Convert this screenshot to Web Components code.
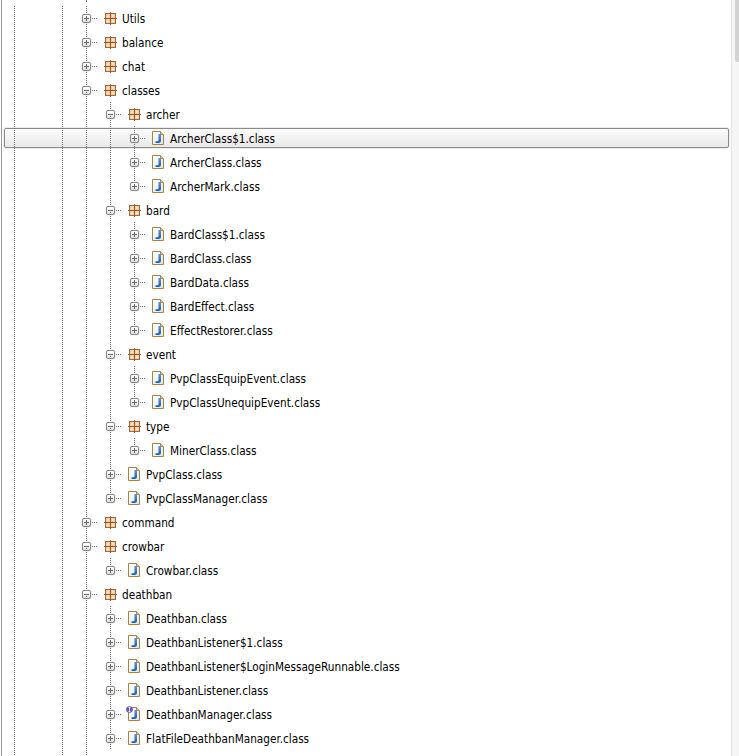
<!DOCTYPE html>
<html>
<head>
<meta charset="utf-8">
<title>Project tree</title>
<style>
  html, body { margin: 0; background: #fff; height: 100%; overflow: hidden; }
</style>
</head>
<body>
<file-tree></file-tree>

<script>
// one row per line of the tree: [depth, name, kind, open, selected]
// kind: p = package, c = class, w = class with the info badge
const ROWS = [
  [3, "Utils", "p"], [3, "balance", "p"], [3, "chat", "p"], [3, "classes", "p", 1],
  [4, "archer", "p", 1],
  [5, "ArcherClass$1.class", "c", 0, 1], [5, "ArcherClass.class", "c"], [5, "ArcherMark.class", "c"],
  [4, "bard", "p", 1],
  [5, "BardClass$1.class", "c"], [5, "BardClass.class", "c"], [5, "BardData.class", "c"],
  [5, "BardEffect.class", "c"], [5, "EffectRestorer.class", "c"],
  [4, "event", "p", 1],
  [5, "PvpClassEquipEvent.class", "c"], [5, "PvpClassUnequipEvent.class", "c"],
  [4, "type", "p", 1],
  [5, "MinerClass.class", "c"],
  [4, "PvpClass.class", "c"], [4, "PvpClassManager.class", "c"],
  [3, "command", "p"],
  [3, "crowbar", "p", 1],
  [4, "Crowbar.class", "c"],
  [3, "deathban", "p", 1],
  [4, "Deathban.class", "c"], [4, "DeathbanListener$1.class", "c"],
  [4, "DeathbanListener$LoginMessageRunnable.class", "c"], [4, "DeathbanListener.class", "c"],
  [4, "DeathbanManager.class", "w"], [4, "FlatFileDeathbanManager.class", "c"],
];

const PACKAGE_ICON = `<svg width="16" height="16" viewBox="0 0 16 16">
  <rect x="3.500" y="3.500" width="10" height="10" fill="#e9bd92" stroke="#a5683a"/>
  <path d="M4 4h4v4H4zM9 4h4v4H9zM4 9h4v4H4zM9 9h4v4H9z" fill="#f0cba4"/>
  <path d="M5 5h2v2H5zM10 5h2v2h-2zM5 10h2v2H5zM10 10h2v2h-2z" fill="#f8e2c8"/>
  <path d="M8.500 2v13M2 8.500h13" stroke="#955a2c"/>
</svg>`;

const CLASS_ICON = `<svg width="16" height="16" viewBox="0 0 16 16">
  <defs>
    <linearGradient id="pg" x1="0" y1="0" x2="1" y2="1">
      <stop offset="0" stop-color="#ffffff"/><stop offset="1" stop-color="#dbe8f6"/>
    </linearGradient>
    <linearGradient id="jg" x1="0" y1="0" x2="0" y2="1">
      <stop offset="0" stop-color="#5c96d2"/><stop offset="1" stop-color="#1f5ba8"/>
    </linearGradient>
  </defs>
  <path d="M2.500 1.500h8l3 3v10h-11z" fill="url(#pg)" stroke="#a5853d"/>
  <path d="M10.500 1.500v3h3" fill="#f3e6c4" stroke="#a5853d"/>
  <path d="M8.500 4h2.500v6.500q0 2.500-2.500 2.500h-3v-1.800h2q1 0 1-1z" fill="url(#jg)"/>
</svg>`;

const BADGE = `<svg class="badge" width="7" height="7" viewBox="0 0 7 7">
  <circle cx="3.500" cy="3.500" r="3.300" fill="#6a55c0"/>
  <path d="M2.500 1.500h2M3.500 1.500v4M2.500 5.500h2" stroke="#fff" stroke-width=".8" fill="none"/>
</svg>`;

class TreeExpander extends HTMLElement {
  connectedCallback() {
    const open = this.hasAttribute("open");
    this.attachShadow({ mode: "open" }).innerHTML = `
      <style>
        :host { display: block; width: 9px; height: 9px; box-sizing: border-box;
          border: 1px solid #8a8a8a; border-radius: 2px;
          box-shadow: 0 0 1px #888;
          background: linear-gradient(#fff, #dedede); position: relative; }
        i { position: absolute; background: #666; }
        .h { left: 1px; right: 1px; top: 3px; height: 1px; }
        .v { top: 1px; bottom: 1px; left: 3px; width: 1px; }
      </style>
      <i class="h"></i>${open ? "" : `<i class="v"></i>`}`;
  }
}

class TreeRow extends HTMLElement {
  connectedCallback() {
    const depth = +this.getAttribute("depth");
    const guides = (this.getAttribute("guides") || "").split(",");
    const kind = this.getAttribute("kind");
    const open = this.hasAttribute("open");
    let cells = "";
    for (let i = 0; i < depth; i++) {
      cells += `<span class="cell ${guides.includes(String(i)) ? "line" : ""}"></span>`;
    }
    const down = this.hasAttribute("down");
    const body = kind ? `
        <span class="cell exp stub"><tree-expander ${open ? "open" : ""}></tree-expander><span class="dash"></span></span>
        <span class="icon">${kind === "p" ? PACKAGE_ICON : CLASS_ICON}${kind === "w" ? BADGE : ""}</span>
        <span class="label"><slot></slot></span>` : "";
    this.attachShadow({ mode: "open" }).innerHTML = `
      <style>
        :host { display: flex; height: 24px; position: relative; align-items: stretch; }
        .sel { position: absolute; left: 2px; right: 2px; top: 2px; bottom: 2px;
          border: 1px solid #8a8a8a; border-radius: 2px;
          box-shadow: 0 0 2px #bbb;
          background: linear-gradient(#fbfbfb, #e9e9e9); }
        .cell { width: 24px; flex: none; position: relative; }
        .line::before, .stub::before, .stub::after {
          content: ""; position: absolute; left: 12px; top: 0; bottom: 0; width: 1px;
          background: repeating-linear-gradient(#6f6f6f 0 1px, transparent 1px 2px); }
        .exp { display: flex; align-items: center; justify-content: center; }
        .exp tree-expander { position: relative; left: .5px; }
        .stub::before { bottom: 50%; }
        .stub::after { top: 50%; ${down ? "" : "display: none;"} }
        .dash { position: absolute; left: 18px; top: 12px; width: 6px; height: 1px;
          background: repeating-linear-gradient(90deg, #6f6f6f 0 1px, transparent 1px 2px); }
        .icon { width: 24px; flex: none; display: flex; align-items: center; justify-content: center;
          position: relative; }
        .icon svg:not(.badge) { display: block; }
        .badge { position: absolute; left: 4px; top: 4px; }
        .label { position: relative; top: 1px; align-self: center; white-space: nowrap; }
        .top { position: relative; display: flex; }
      </style>
      ${this.hasAttribute("selected") ? `<div class="sel"></div>` : ""}
      <div class="top">${cells}${body}</div>`;
  }
}

class FileTree extends HTMLElement {
  connectedCallback() {
    const root = this.attachShadow({ mode: "open" });
    root.innerHTML = `
      <style>
        :host { display: flex; height: 756px; background: #fff; color: #000;
          font: 11.7px "DejaVu Sans", sans-serif; font-stretch: condensed; overflow: hidden; }
        .frame { flex: 1; min-width: 0; margin-left: 1px; border-left: 1px solid #9a9a9a; padding-top: 6px;
          position: relative; }
        .tip { position: absolute; left: 84px; top: 0; width: 1px; height: 2px; background: #a5683a; }
        .bar { width: 8px; flex: none; background: #f5f5f5; border-left: 1px solid #e4e4e4;
          box-sizing: border-box; padding-left: 3px; }
        .thumb { height: 62px; background: #d2d2d2; border-radius: 0 0 0 3px; }
      </style>
      <div class="frame"><span class="tip"></span></div>
      <div class="bar"><div class="thumb"></div></div>`;
    const frame = root.querySelector(".frame");
    ROWS.forEach((r, n) => {
      const [depth, name, kind, open, selected] = r;
      const row = document.createElement("tree-row");
      // which ancestor columns keep a line going on this row
      const guides = [0, 2];
      for (let d = 3; d < depth; d++) {
        let more = d === 3;
        for (let k = n + 1; k < ROWS.length && ROWS[k][0] >= d; k++) {
          if (ROWS[k][0] === d) { more = true; break; }
        }
        if (more) guides.push(d);
      }
      row.setAttribute("depth", depth);
      row.setAttribute("guides", guides.join(","));
      row.setAttribute("kind", kind);
      if (open) row.setAttribute("open", "");
      if (selected) row.setAttribute("selected", "");
      // depth 3 and 4 carry on below the last visible row
      let hasSibling = depth === 3 || (depth === 4 && n === ROWS.length - 1);
      for (let k = n + 1; k < ROWS.length && ROWS[k][0] >= depth; k++) {
        if (ROWS[k][0] === depth) { hasSibling = true; break; }
      }
      if (hasSibling) row.setAttribute("down", "");
      row.textContent = name;
      frame.append(row);
    });
    // what is left under the last row only shows the long guides
    const rest = document.createElement("tree-row");
    rest.setAttribute("depth", 4);
    rest.setAttribute("guides", "0,2,3");
    frame.append(rest);
  }
}

customElements.define("tree-expander", TreeExpander);
customElements.define("tree-row", TreeRow);
customElements.define("file-tree", FileTree);
</script>
</body>
</html>
